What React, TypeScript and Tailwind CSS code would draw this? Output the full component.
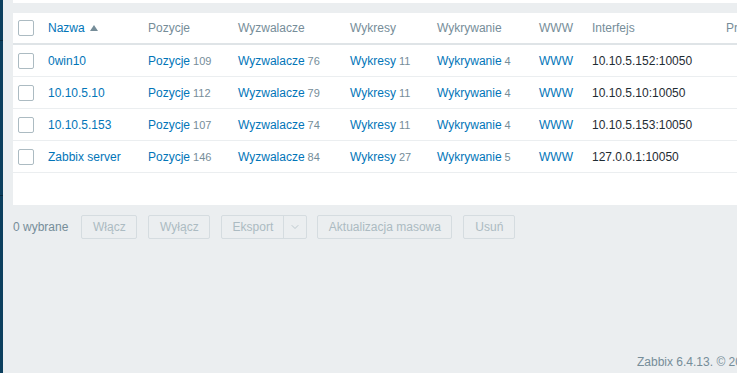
import { ChevronDown } from 'lucide-react';

const font = { fontFamily: '"Liberation Sans", Arial, sans-serif' };

interface Host {
  name: string;
  items: number;
  triggers: number;
  graphs: number;
  discovery: number;
  iface: string;
}

const hosts: Host[] = [
  { name: '0win10', items: 109, triggers: 76, graphs: 11, discovery: 4, iface: '10.10.5.152:10050' },
  { name: '10.10.5.10', items: 112, triggers: 79, graphs: 11, discovery: 4, iface: '10.10.5.10:10050' },
  { name: '10.10.5.153', items: 107, triggers: 74, graphs: 11, discovery: 4, iface: '10.10.5.153:10050' },
  { name: 'Zabbix server', items: 146, triggers: 84, graphs: 27, discovery: 5, iface: '127.0.0.1:10050' },
];

const cols = 'grid grid-cols-[30px_100px_90px_112px_87px_102px_53px_134px_1fr]';

function Checkbox() {
  return <span className="block w-4 h-4 rounded-[2px] border border-[#acbbc2] bg-white" />;
}

function Link({ label, count }: { label: string; count?: number }) {
  return (
    <span className="whitespace-nowrap">
      <span className="text-[#0275b8]">{label}</span>
      {count !== undefined && <span className="text-[#768d99] text-[11px] ml-[3px]">{count}</span>}
    </span>
  );
}

function Btn({ children, className = '' }: { children: React.ReactNode; className?: string }) {
  return (
    <span
      className={`h-6 flex items-center justify-center border border-[#d5dce0] rounded-[2px] text-[#acbbc2] ${className}`}
    >
      {children}
    </span>
  );
}

export default function App() {
  return (
    <div className="w-[737px] h-[373px] overflow-hidden flex text-[12px] bg-[#ebeef0]" style={font}>
      {/* sidebar edge */}
      <div className="w-[3px] shrink-0 bg-[#0c3f5e] flex flex-col">
        <div className="h-[40px]" />
        <div className="h-px bg-[#072a40]" />
        <div className="h-[154px]" />
        <div className="h-px bg-[#072a40]" />
      </div>

      <div className="flex-1 flex flex-col pl-[10px] min-w-0">
        <div className="h-[3px] bg-white -mr-10" />

        {/* table */}
        <div className="mt-[10px] bg-white h-[192px] -mr-10 border-r border-[#dfe4e7]">
          <div className={`${cols} h-[32px] items-center border-b-2 border-[#dfe4e7] text-[#768d99]`}>
            <div className="pl-[5px]"><Checkbox /></div>
            <div className="pl-[5px] flex items-center gap-[5px]">
              <span className="text-[#0275b8]">Nazwa</span>
              <svg width="8" height="6" viewBox="0 0 8 6"><path d="M0 6 L4 0 L8 6 Z" fill="#768d99" /></svg>
            </div>
            <div className="pl-[5px]">Pozycje</div>
            <div className="pl-[5px]">Wyzwalacze</div>
            <div className="pl-[5px]">Wykresy</div>
            <div className="pl-[5px]">Wykrywanie</div>
            <div className="pl-[5px]">WWW</div>
            <div className="pl-[5px]">Interfejs</div>
            <div className="pl-[5px] whitespace-nowrap">Proxy</div>
          </div>
          {hosts.map((h) => (
            <div key={h.name} className={`${cols} h-[32px] items-center border-b border-[#ebeef0]`}>
              <div className="pl-[5px]"><Checkbox /></div>
              <div className="pl-[5px] text-[#0275b8]">{h.name}</div>
              <div className="pl-[5px]"><Link label="Pozycje" count={h.items} /></div>
              <div className="pl-[5px]"><Link label="Wyzwalacze" count={h.triggers} /></div>
              <div className="pl-[5px]"><Link label="Wykresy" count={h.graphs} /></div>
              <div className="pl-[5px]"><Link label="Wykrywanie" count={h.discovery} /></div>
              <div className="pl-[5px]"><Link label="WWW" /></div>
              <div className="pl-[5px] text-[#1f2c33]">{h.iface}</div>
              <div />
            </div>
          ))}
        </div>

        {/* actions */}
        <div className="mt-[10px] flex items-center h-6">
          <span className="text-[#768d99] shrink-0">0 wybrane</span>
          <Btn className="w-[56px] ml-[13px]">Włącz</Btn>
          <Btn className="w-[62px] ml-[11px]">Wyłącz</Btn>
          <div className="ml-[11px] flex h-6 border border-[#d5dce0] rounded-[2px] text-[#acbbc2]">
            <span className="w-[62px] flex items-center justify-center border-r border-[#d5dce0]">Eksport</span>
            <span className="w-[22px] flex items-center justify-center">
              <ChevronDown size={12} strokeWidth={1.5} />
            </span>
          </div>
          <Btn className="w-[135px] ml-[10px]">Aktualizacja masowa</Btn>
          <Btn className="w-[52px] ml-[11px]">Usuń</Btn>
        </div>

        <div className="flex-1" />
        <div className="h-[20px] mb-[1px] flex items-center pl-[624px] whitespace-nowrap text-[#768d99]">
          Zabbix 6.4.13. © 2001–2024, Zabbix SIA
        </div>
      </div>
    </div>
  );
}
